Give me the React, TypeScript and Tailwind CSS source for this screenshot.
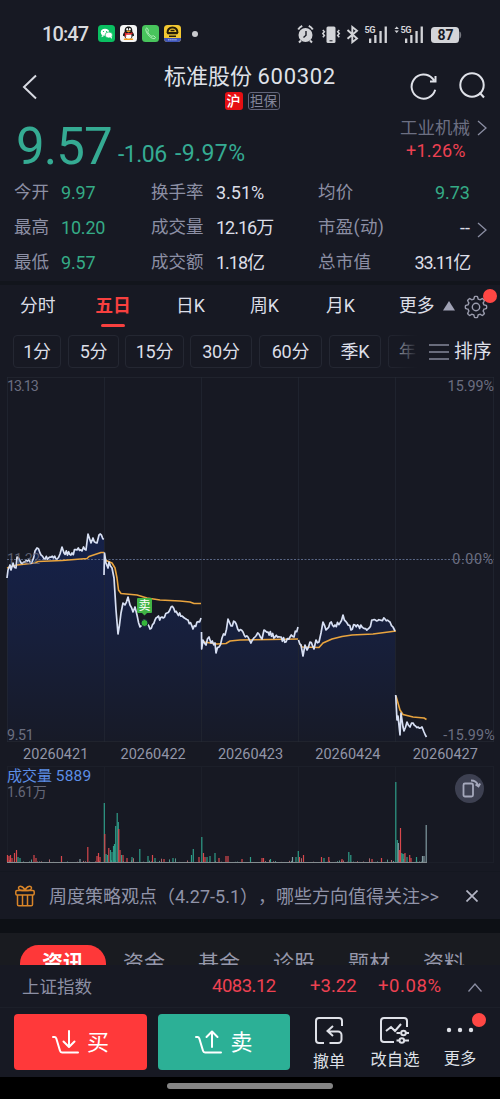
import React from "react";

type Pt = [number, number];

const PRICE: Pt[][] = [
  [[7, 578], [8, 570], [10, 565], [11, 570], [13, 563], [16, 568], [17, 557], [20, 561], [25, 562], [32, 562], [35, 551], [37, 548], [40, 553], [45, 559], [50, 557], [57, 559], [60, 554], [62, 547], [64, 553], [72, 553], [77, 550], [82, 551], [83.5, 547], [86, 550], [88, 534], [91, 543], [93, 538], [97, 543], [99, 535], [104, 539]],
  [[104, 575], [104.5, 553], [106, 563], [108, 568], [109, 562], [112, 568], [114, 578], [116, 610], [118, 634], [121, 613], [123, 603], [125, 605], [128, 597], [130, 605], [133, 612], [135, 607], [137, 615], [140, 627], [143, 621], [147, 624], [150, 629], [155, 620], [162, 617], [167, 613], [171, 607], [175, 612], [182, 616], [188, 620], [193, 629], [197, 622], [201, 618]],
  [[201.5, 632], [201.7, 649], [203, 640], [206, 645], [209, 637], [211, 643], [215, 643], [216, 653], [219, 647], [222, 638], [225, 635], [228, 619], [231, 626], [235, 622], [239, 631], [243, 632], [248, 637], [251, 643], [255, 637], [259, 634], [262, 639], [264, 630], [268, 632], [275, 637], [280, 637], [286, 642], [290, 637], [294, 637], [298, 627]],
  [[298.5, 640], [301, 645], [303, 656], [305, 645], [307, 650], [310, 642], [314, 649], [316, 640], [319, 642], [321, 633], [323, 622], [326, 630], [330, 623], [335, 625], [340, 623], [343, 615], [347, 623], [351, 630], [355, 625], [362, 627], [368, 629], [373, 620], [380, 620], [385, 619], [390, 622], [393, 627], [395, 631]],
  [[395.7, 695], [397, 720], [398, 716], [400, 735], [401, 713], [403, 727], [404, 731], [407, 722], [410, 727], [413, 723], [418, 727], [422, 727], [424, 732], [426.5, 737]],
];

const AVERAGE: Pt[][] = [
  [[7, 568], [17, 565], [35, 563], [38, 561.5], [62, 560.5], [87, 558.5], [89, 556.5], [101, 552.5], [104, 552.5]],
  [[105, 560], [112, 563], [115, 568], [117, 578], [118.5, 590], [121, 593.5], [137, 595], [147, 598], [160, 600], [180, 601], [190, 602], [194, 603.5], [201, 603.5]],
  [[203, 642], [211, 643], [217, 644], [226, 643.5], [230, 641], [240, 640], [270, 639.5], [298, 639]],
  [[300, 644], [302, 647], [319, 647.5], [323, 643], [332, 639], [342, 636.5], [352, 635], [373, 634], [396, 631]],
  [[396, 696], [398, 703], [400, 710], [403, 714.5], [413, 717], [424, 718], [426.5, 719.5]],
];

const noise = (n: number) => {
  const v = Math.sin(n * 127.1) * 43758.5453;
  return v - Math.floor(v);
};

const roughen = (pts: Pt[]): Pt[] => {
  const out: Pt[] = [];
  pts.forEach((p, i) => {
    out.push(p);
    const next = pts[i + 1];
    if (!next) return;
    const steps = Math.floor((next[0] - p[0]) / 1.1);
    for (let s = 1; s < steps; s++) {
      const t = s / steps;
      const x = p[0] + (next[0] - p[0]) * t;
      out.push([x, p[1] + (next[1] - p[1]) * t + (noise(x) - 0.5) * 5]);
    }
  });
  return out;
};

const toPath = (pts: Pt[]) => "M" + pts.map(([x, y]) => `${x.toFixed(1)} ${y.toFixed(1)}`).join("L");
const priceLines = PRICE.map(roughen);

type Bar = [number, number, "r" | "g" | "w"];
const BARS: Bar[] = [
  [7.5, 7, "r"], [9, 6, "r"], [10.5, 7, "r"], [12, 4, "r"], [14.5, 9, "r"], [16.5, 12, "r"], [18, 5, "g"], [20, 4, "g"], [34, 7, "r"], [36, 4, "r"], [61.5, 6, "r"], [80, 3, "w"], [87.8, 15, "r"], [97, 6, "r"], [98.5, 9, "r"], [100, 5, "r"],
  [104.3, 59, "g"], [104.8, 28, "r"], [106, 8, "g"], [107.5, 7, "g"], [108.8, 14, "r"], [110.5, 12, "g"], [112, 10, "g"], [113.5, 16, "g"], [114.5, 18, "g"], [115.7, 36, "g"], [117.2, 49, "g"], [118.3, 40, "g"], [118.8, 33, "r"], [120, 12, "r"], [121.5, 7, "g"], [123, 7, "r"], [127, 4, "r"], [132, 5, "g"], [139.8, 13, "g"], [148, 6, "g"], [152.5, 7, "r"], [155, 4, "g"], [164, 3, "r"], [173, 4, "g"], [191.5, 7, "g"], [193.3, 13, "g"], [199, 5, "r"],
  [201.8, 25, "g"], [203.5, 9, "r"], [205, 5, "r"], [207, 5, "g"], [210, 6, "g"], [215, 9, "g"], [219, 4, "r"], [226, 6, "r"], [228, 6, "r"], [242, 3, "r"], [250.5, 5, "g"], [262, 4, "r"], [263.5, 4, "r"], [270.5, 3, "g"], [292.5, 5, "w"], [296, 5, "g"],
  [298.3, 11, "g"], [299.5, 5, "r"], [303.5, 7, "r"], [321.5, 5, "r"], [324, 4, "g"], [328.8, 5, "r"], [342, 3, "r"], [348.8, 10, "g"], [350.8, 7, "g"], [372, 3, "r"], [381.5, 4, "r"],
  [395.8, 80, "g"], [397.3, 22, "g"], [398.3, 19, "w"], [399.3, 12, "r"], [400.5, 34, "r"], [401.8, 9, "g"], [402.8, 8, "g"], [404, 8, "g"], [405, 9, "r"], [407, 5, "g"], [409.7, 7, "r"], [411, 4, "r"], [416.5, 5, "g"], [422.5, 6, "w"], [424, 6, "w"], [426.2, 37, "w"],
];
const barColor = { r: "#d8474c", g: "#2f9d88", w: "#829ba1" };

function Chevron({ className }: { className?: string }) {
  return (
    <svg viewBox="0 0 10 16" width="10" height="16" className={className} fill="none" stroke="#8b8ea3" strokeWidth="1.3">
      <path d="M1 1l8 7-8 7" />
    </svg>
  );
}

function StatusBar() {
  return (
    <div className="flex h-[58px] items-center pt-[9px] pl-[42px] pr-[38px] text-[#d9dade]">
      <span className="w-[56px] text-[20px] font-medium tracking-[-0.9px]">10:47</span>
      <div className="flex gap-[5px]">
        <svg width="17" height="17" viewBox="0 0 17 17">
          <rect width="17" height="17" rx="3.5" fill="#0abf61" />
          <ellipse cx="7" cy="7.3" rx="4.2" ry="3.5" fill="#fff" />
          <ellipse cx="10.8" cy="10" rx="3.7" ry="3" fill="#fff" stroke="#0abf61" strokeWidth=".7" />
          <circle cx="5.5" cy="6.5" r=".6" fill="#0abf61" /><circle cx="8.6" cy="6.5" r=".6" fill="#0abf61" />
          <path d="M4 10l-.5 2.3L6 11zM12 12l2 1.900-.3-2.400z" fill="#fff" />
        </svg>
        <svg width="17" height="17" viewBox="0 0 17 17">
          <rect width="17" height="17" rx="3.5" fill="#f5f5f5" />
          <path d="M8.5 1.5c-3 0-4 2.3-3.8 5C3.5 8 2.8 9.8 3 11c.6.3 1.2-.6 1.2-.6.4 2 1.5 4 4.3 4s3.9-2 4.3-4c0 0 .6.9 1.2.6.2-1.200-.5-3-1.700-4.500.2-2.700-.8-5-3.800-5z" fill="#161616" />
          <ellipse cx="8.5" cy="11" rx="3" ry="3.3" fill="#fff" />
          <path d="M4.5 7.3c2.5 1.3 5.500 1.3 8 0v1.600c-2.500 1.100-5 1.100-6.300.8v2H4.900V9.200z" fill="#df2727" />
          <ellipse cx="7.2" cy="4.2" rx=".9" ry="1.2" fill="#fff" /><ellipse cx="9.8" cy="4.2" rx=".9" ry="1.2" fill="#fff" />
          <ellipse cx="8.5" cy="6.3" rx="2.2" ry=".7" fill="#f5a51b" />
          <path d="M4.500 14.200h3.500M9 14.200h3.500" stroke="#f39a1b" strokeWidth="1.5" strokeLinecap="round" />
        </svg>
        <svg width="17" height="17" viewBox="0 0 17 17">
          <rect width="17" height="17" rx="3.5" fill="#48c45c" />
          <path d="M4 3.5C2.8 6 7.5 13.5 12 13.7c1.3 0 1.7-1.2 1.2-1.700l-1.700-1.200c-.6-.3-1 .6-1.700.5C8 10.700 6 8.200 5.700 7c0-.7.9-1 .7-1.700l-.9-1.800c-.4-.6-1-.6-1.500 0z" fill="none" stroke="#c8f5ce" strokeWidth=".8" />
        </svg>
        <svg width="17" height="17" viewBox="0 0 17 17">
          <rect width="17" height="17" rx="3.5" fill="#f3c832" />
          <path d="M3.500 8c0-3.500 2-5.500 5-5.500s5 2 5 5.500" fill="none" stroke="#251d09" strokeWidth="2" />
          <rect x="3" y="7" width="11" height="2.2" rx="1" fill="#251d09" />
          <path d="M5 11.300h7M6.500 5.500h4" stroke="#251d09" strokeWidth="1.600" />
          <path d="M0 13h17v.5a3.500 3.500 0 0 1-3.500 3.500h-10A3.500 3.500 0 0 1 0 13.500z" fill="#3f55b8" />
          <path d="M4 14.800h9" stroke="#d7def7" strokeWidth=".8" strokeDasharray="1.500 .6" />
        </svg>
      </div>
      <span className="ml-[11px] size-[6px] rounded-full bg-[#c9cace]" />
      <svg className="ml-auto" width="166" height="20" viewBox="296 23 166 20" fill="none" stroke="#d3d4d8">
        <circle cx="305.500" cy="34" r="7" fill="#d3d4d8" stroke="none" />
        <path d="M298.200 28.500a10 10 0 0 1 4-3.600M312.800 28.500a10 10 0 0 0-4-3.600M301 39.500l-2 2M310 39.500l2 2" strokeWidth="2" />
        <path d="M306 30v4.200l-2.500 2.300" stroke="#171923" strokeWidth="1.400" />
        <rect x="326.500" y="25.500" width="9" height="16.500" rx="1.500" fill="#d3d4d8" stroke="none" />
        <path d="M329.500 39.800h3" stroke="#171923" strokeWidth="1" />
        <path d="M322.800 29l1.600 1.800-1.600 1.800 1.600 1.800-1.600 1.800M339.300 29l-1.600 1.800 1.600 1.800-1.600 1.800 1.600 1.800" strokeWidth="1.500" />
        <path d="M347.500 29l9.500 8.500-4.700 3.700V26l4.700 3.800-9.500 8" strokeWidth="1.900" />
        <g fill="#d3d4d8" stroke="none">
          <text x="364.500" y="32" fontSize="9.200" fontWeight="700" textLength="11">5G</text>
          <text x="400.500" y="32" fontSize="9.200" fontWeight="700" textLength="11">5G</text>
          <path d="M394.500 28l2.200-2.600 2.200 2.600zM394.500 29.500l2.200 2.600 2.200-2.600z" />
          <path d="M369 37.500h2.300V42H369zM374.200 34h2.300v8h-2.300zM379.400 30h2.300v12h-2.300zM384.600 25.500h2.300V42h-2.300zM405 37.500h2.300V42H405zM410.200 34h2.300v8h-2.300zM415.400 30h2.300v12h-2.300zM420.600 25.500h2.300V42h-2.300z" />
          <rect x="431" y="26" width="28" height="16" rx="3.500" />
          <path d="M459.300 30.500c2.500 0 2.500 7 0 7z" fill="#777980" />
          <text x="445.500" y="39" fontSize="14" fontWeight="700" fill="#171923" textAnchor="middle">87</text>
        </g>
      </svg>
    </div>
  );
}

function Header() {
  return (
    <header className="grid h-[57px] grid-cols-[100px_1fr_100px]">
      <svg className="mt-[16px] ml-[22px]" width="16" height="26" viewBox="0 0 16 26" fill="none" stroke="#d8dae2" strokeWidth="2">
        <path d="M14 1.500L2 13l12 11.500" />
      </svg>
      <div className="flex flex-col items-center pt-[4px]">
        <h1 className="text-[22px] leading-[29px] font-normal whitespace-nowrap text-[#dfe1e8]">标准股份 <span className="tracking-[.7px]">600302</span></h1>
        <div className="mt-[1px] ml-[4px] flex gap-[5px] text-[14px]">
          <span className="flex h-[18px] w-[18px] items-center justify-center rounded-[3px] bg-[#e60f12] font-medium text-white">沪</span>
          <span className="flex h-[18px] w-[32px] items-center justify-center rounded-[3px] border border-[#62657a] text-[13.500px] text-[#85889c]">担保</span>
        </div>
      </div>
      <div className="flex pt-[14px] pl-[9px]">
        <svg width="30" height="30" viewBox="0 0 30 30" fill="none" stroke="#dfe1e8" strokeWidth="2">
          <path d="M26.200 17.800A12 12 0 1 1 23.500 6.500l1.500 2M26.500 4v5.500H21" />
        </svg>
        <svg className="ml-[18px]" width="30" height="30" viewBox="0 0 30 30" fill="none" stroke="#dfe1e8" strokeWidth="2">
          <circle cx="15" cy="13" r="11.700" /><path d="M22.500 20.500l4.500 5" />
        </svg>
      </div>
    </header>
  );
}

function Quote() {
  return (
    <section className="flex h-[59px] pr-[13px] pl-[16px]">
      <span className="w-[102px] pt-[3px] text-[51px] leading-[58px] tracking-[-0.900px] text-[#35ab93]">9.57</span>
      <span className="w-[57px] pt-[25px] text-[23px] leading-[30px] tracking-[-0.500px] text-[#35ab93]">-1.06</span>
      <span className="pt-[24px] text-[23px] leading-[30px] tracking-[.4px] text-[#35ab93]">-9.97%</span>
      <div className="ml-auto">
        <div className="flex h-[24px] items-center gap-[7px] pt-[2px] text-[17.500px] text-[#6c6f82]">工业机械<Chevron /></div>
        <div className="pl-[6px] text-[18px] leading-[24px] tracking-[.2px] text-[#ee4152]">+1.26%</div>
      </div>
    </section>
  );
}

const STATS: [string, string, string, string, string, string][] = [
  ["今开", "9.97", "换手率", "3.51%", "均价", "9.73"],
  ["最高", "10.20", "成交量", "12.16万", "市盈(动)", "--"],
  ["最低", "9.57", "成交额", "1.18亿", "总市值", "33.11亿"],
];

function Stats() {
  const tight = "tracking-[-1px]";
  const rightTone = ["text-[#35ab86]", "text-[#dcdee7]", "text-[#dcdee7] tracking-[-1.300px]"];
  return (
    <section className="h-[107px] pt-[1px] text-[17.500px] text-[#8c8fa4]">
      {STATS.map((r, i) => (
        <div key={r[0]} className="grid h-[35px] grid-cols-[47px_90px_65px_102px_85px_67px_1fr] items-center pl-[14px]">
          <span>{r[0]}</span>
          <span className="text-[18px] tracking-[-0.200px] text-[#35ab86]">{r[1]}</span>
          <span>{r[2]}</span>
          <span className={`text-[18px] whitespace-nowrap text-[#dcdee7] ${i > 0 ? tight : ""}`}>{r[3]}</span>
          <span className="whitespace-nowrap tracking-[.3px]">{r[4]}</span>
          <span className={`text-right text-[18px] whitespace-nowrap ${rightTone[i]}`}>{r[5]}</span>
          {i === 1 && <Chevron className="mt-[5px] ml-[7px]" />}
        </div>
      ))}
    </section>
  );
}

function gearPath() {
  const pts: string[] = [];
  for (let i = 0; i <= 96; i++) {
    const a = (i / 96) * Math.PI * 2;
    const w = Math.cos(a * 8);
    const r = 9.4 + Math.max(-1, Math.min(1, w * 1.8)) * 1.25;
    pts.push(`${(12 + Math.cos(a) * r).toFixed(2)} ${(12 + Math.sin(a) * r).toFixed(2)}`);
  }
  return "M" + pts.join("L") + "Z";
}

function PeriodTabs() {
  return (
    <nav className="grid h-[47px] grid-cols-[76px_80px_74px_76px_74px_44px_18px_1fr] border-t-4 border-[#12151c] pl-[20px] text-[17.800px] leading-[42px] text-[#dcdee7]">
      <span>分时</span>
      <div className="flex w-[34px] flex-col items-center font-bold text-[#f8403f]">
        <span className="h-[39px] leading-[42px] whitespace-nowrap">五日</span>
        <i className="h-[3px] w-[24px] shrink-0 rounded-full bg-[#f8403f]" />
      </div>
      <span>日K</span><span>周K</span><span>月K</span><span className="-ml-px">更多</span>
      <svg className="mt-[16px] -ml-px" width="12" height="10" viewBox="0 0 12 10"><path d="M6 0l6 9.500H0z" fill="#a0a2b5" /></svg>
      <div className="relative">
        <svg className="mt-[10px] ml-[2px]" width="24" height="24" viewBox="0 0 24 24" fill="none" stroke="#9a9cad" strokeWidth="1.400">
          <path d={gearPath()} /><circle cx="12" cy="12" r="3.700" />
        </svg>
        <span className="absolute top-[4px] left-[21px] size-[14px] rounded-full bg-[#ff4744]" />
      </div>
    </nav>
  );
}

function MinuteTabs() {
  const pill = "flex h-[33px] shrink-0 items-center justify-center rounded-[4px] border border-[#242732] text-[18px] tracking-[-0.200px]";
  return (
    <div className="flex h-[49px] items-start pt-[7px] pl-[13px] text-[#dcdee7]">
      <span className={`${pill} mr-[7px] w-[48px]`}>1分</span>
      <span className={`${pill} mr-[6px] w-[51px]`}>5分</span>
      <span className={`${pill} mr-[6px] w-[59px]`}>15分</span>
      <span className={`${pill} mr-[7px] w-[62px]`}>30分</span>
      <span className={`${pill} mr-[7px] w-[63px]`}>60分</span>
      <span className={`${pill} mr-[7px] w-[52px]`}>季K</span>
      <div className="relative w-[30px]">
        <span className="flex h-[33px] w-[30px] items-center rounded-l-[4px] border border-r-0 border-[#242732] pl-[10px] text-[17px]">年</span>
        <span className="absolute inset-0 bg-linear-to-r from-[#171923]/10 to-[#171923]" />
      </div>
      <svg className="mt-[9px] ml-[11px]" width="20" height="17" viewBox="0 0 20 17" stroke="#85889b" strokeWidth="1.500"><path d="M0 1h20M0 8h20M0 15h20" /></svg>
      <span className="ml-[5px] text-[18.800px] leading-[34px] whitespace-nowrap">排序</span>
    </div>
  );
}

function PriceChart() {
  return (
    <section className="relative h-[365px] text-[14.300px] leading-[16px] text-[#6b6e80]">
      <svg className="absolute inset-0" width="500" height="365" viewBox="0 377 500 365" fill="none">
        <defs>
          <linearGradient id="area" gradientUnits="userSpaceOnUse" x1="0" y1="535" x2="0" y2="742">
            <stop offset="0" stopColor="#152149" />
            <stop offset=".5" stopColor="#171f3b" />
            <stop offset="1" stopColor="#171a27" />
          </linearGradient>
        </defs>
        {priceLines.map((p, i) => (
          <path key={i} fill="url(#area)" d={`${toPath(p)}L${p[p.length - 1][0]} 742L${p[0][0]} 742Z`} />
        ))}
        <path d="M7 377.500H494M7 741.500H494" stroke="#20232d" />
        <path d="M7.500 377v365M104.500 377v365M201.500 377v365M298.500 377v365M395.500 377v365M493.500 377v365" stroke="#252936" strokeOpacity=".6" />
        <path d="M7 559.500H494" stroke="#596685" strokeDasharray="2 1.500" />
        {AVERAGE.map((p, i) => <path key={i} d={toPath(p)} stroke="#e9a43e" strokeWidth="1.600" strokeLinejoin="round" />)}
        {priceLines.map((p, i) => <path key={i} d={toPath(p)} stroke="#d7dff3" strokeWidth="1.700" strokeLinejoin="round" />)}
        <circle cx="144.500" cy="623" r="3.500" fill="#35b63b" stroke="#171e3a" strokeWidth="1" />
        <path d="M141 612h7l-3.500 3.500z" fill="#41b445" />
      </svg>
      <span className="absolute top-[1px] left-[7px] tracking-[-1px]">13.13</span>
      <span className="absolute top-[1px] right-[6px]">15.99%</span>
      <span className="absolute top-[174px] left-[7px] tracking-[-0.700px] opacity-80">11.32</span>
      <span className="absolute top-[174px] right-[6px] tracking-[.7px]">0.00%</span>
      <span className="absolute top-[350px] left-[7px] tracking-[-0.400px]">9.51</span>
      <span className="absolute top-[350px] right-[5px] tracking-[.2px]">-15.99%</span>
      <span className="absolute top-[221px] left-[137px] flex h-[15px] w-[15px] items-center justify-center rounded-[1px] bg-[#41b445] text-[12px] text-white">卖</span>
    </section>
  );
}

function VolumeChart() {
  return (
    <section className="relative h-[105px]">
      <svg className="absolute inset-0" width="500" height="105" viewBox="0 766 500 105" fill="none">
        <path d="M7 766.500H494M7 862.500H494M7.500 766v97M104.500 766v97M201.500 766v97M298.500 766v97M395.500 766v97M493.500 766v97" stroke="#1c1f29" />
        <path d="M7 862.500H427" stroke="#848c90" />
        {Array.from({ length: 210 }, (_, i) => (
          <path key={i} d={`M${7.5 + i * 2} 862V${(862 - Math.pow(noise(i + 3), 7) * 4).toFixed(1)}`} stroke={noise(i + 40) > 0.5 ? "#a9666b" : "#56958a"} />
        ))}
        {BARS.map(([x, h, c], i) => <path key={i} d={`M${x} 862V${862 - h}`} stroke={barColor[c]} strokeWidth="1.200" />)}
      </svg>
      <div className="relative flex flex-col pl-[7px]">
        <span className="text-[15px] leading-[20px] text-[#5c8ee6]">成交量 <span className="text-[15.500px] tracking-[.2px]">5889</span></span>
        <span className="mt-[-2px] text-[14px] leading-[16px] tracking-[-0.400px] text-[#656879]">1.61万</span>
      </div>
      <span className="absolute top-[8px] left-[455px] size-[29px] rounded-full bg-[#3d4051]">
        <svg width="29" height="29" viewBox="0 0 29 29" fill="none" stroke="#a5a8bc" strokeWidth="1.800">
          <rect x="8.500" y="9.500" width="9.500" height="13" rx="1.500" />
          <path d="M16 6.500c3.500 0 6 1.500 7.200 5M20.500 10.500l3 2 1.700-3" />
        </svg>
      </span>
    </section>
  );
}

function Banner() {
  return (
    <div className="flex h-[48px] items-center border-t border-[#141720] pl-[15px] text-[18px] text-[#9093a8]">
      <svg width="20" height="22" viewBox="0 0 20 22" fill="none" stroke="#d98528" strokeWidth="1.500">
        <rect x=".8" y="5.500" width="18.400" height="4.500" rx="1.200" />
        <path d="M2.500 10v9.500c0 .8.500 1.300 1.300 1.300h12.400c.8 0 1.300-.5 1.300-1.300V10M7.500 10v10.500M12.500 10v10.500" />
        <path d="M10 5.500C7.500 5.500 3.500 5.700 3.500 3S8.500.8 10 5.500zM10 5.500c2.500 0 6.500.2 6.500-2.500S11.500.8 10 5.500z" />
      </svg>
      <span className="ml-[14px] w-[417px] pt-[2px] whitespace-nowrap [text-spacing-trim:space-all]">周度策略观点（4.27-5.1），哪些方向值得关注&gt;&gt;</span>
      <svg width="12" height="12" viewBox="0 0 12 12" stroke="#b3b5c4" strokeWidth="1.700"><path d="M.5.5l11 11M11.500.5l-11 11" /></svg>
    </div>
  );
}

function NewsTabs() {
  return (
    <div className="grid h-[46px] grid-cols-[86px_75px_75px_75px_75px_1fr] items-start overflow-hidden border-t-[14px] border-[#0d1015] bg-[#191b20] pl-[20px] text-[21px] leading-[36px] text-[#9698ab]">
      <span className="mt-[12px] h-[37px] rounded-full bg-[#fe3839] text-center font-bold text-white">资讯</span>
      <span className="mt-[12px] pl-[17px]">资金</span>
      <span className="mt-[12px] pl-[17px]">基金</span>
      <span className="mt-[12px] pl-[17px]">诊股</span>
      <span className="mt-[12px] pl-[17px]">题材</span>
      <span className="mt-[12px] pl-[17px]">资料</span>
    </div>
  );
}

function IndexRow() {
  return (
    <div className="flex h-[43px] items-center border-b border-[#1c1f29] pt-[2px] pl-[22px] text-[18.500px] text-[#ee4152]">
      <span className="w-[190px] text-[17.500px] text-[#8c8fa4]">上证指数</span>
      <span className="w-[98px] tracking-[-0.500px]">4083.12</span>
      <span className="w-[68px]">+3.22</span>
      <span className="w-[90px] tracking-[.6px]">+0.08%</span>
      <svg width="14" height="9" viewBox="0 0 14 9" fill="none" stroke="#8b8ea3" strokeWidth="1.300"><path d="M.5 8.500L7 1l6.500 7.500" /></svg>
    </div>
  );
}

function TradeBar() {
  return (
    <div className="flex h-[69px] pt-[6px] pl-[14px] text-[#dfe1e8]">
      <button className="flex h-[56px] w-[133px] items-center justify-center gap-[8px] rounded-[4px] bg-[#ff393a] text-[22px] text-white">
        <svg width="27" height="24" viewBox="0 0 27 24" fill="none" stroke="#fff" strokeWidth="2" strokeLinecap="round" strokeLinejoin="round">
          <path d="M1 7h1.500c1 0 1.500.6 1.800 1.500l3.700 12.300c.3 1.100.9 1.700 2 1.700h16M17 1v15M11.500 11.500L17 17l5.500-5.500" />
        </svg>买
      </button>
      <button className="ml-[11px] flex h-[56px] w-[132px] items-center justify-center gap-[8px] rounded-[4px] bg-[#2cb096] text-[22px] text-white">
        <svg width="27" height="24" viewBox="0 0 27 24" fill="none" stroke="#fff" strokeWidth="2" strokeLinecap="round" strokeLinejoin="round">
          <path d="M1 7h1.500c1 0 1.500.6 1.800 1.500l3.700 12.300c.3 1.100.9 1.700 2 1.700h16M17 17V2M11.500 7L17 1.500 22.500 7" />
        </svg>卖
      </button>
      <div className="ml-[22px] flex w-[34px] flex-col items-center pt-[3px] text-[16px] whitespace-nowrap">
        <svg width="28" height="28" viewBox="0 0 28 28" fill="none" stroke="#dfe1e8" strokeWidth="2">
          <path d="M27 9V4a3 3 0 0 0-3-3H4a3 3 0 0 0-3 3v19a3 3 0 0 0 3 3h5M18 9l-5.500 5 5.500 5M12.500 14.500H23a3.500 3.500 0 0 1 3.500 3.500v4.500A3.500 3.500 0 0 1 23 26h-8.500" />
        </svg>
        <span className="mt-[6px] leading-[21px]">撤单</span>
      </div>
      <div className="ml-[21px] flex w-[56px] flex-col items-center pt-[3px] text-[16.300px] whitespace-nowrap">
        <svg width="30" height="28" viewBox="0 0 30 28" fill="none" stroke="#dfe1e8" strokeWidth="2">
          <path d="M27 10V4a3 3 0 0 0-3-3H4a3 3 0 0 0-3 3v18a3 3 0 0 0 3 3h10M6 14l5-4 4 4 6-7M16.500 16h4M26 16h3M16.500 23.500h2.500M25 23.500h4" />
          <circle cx="23.500" cy="16" r="2.300" /><circle cx="21.800" cy="23.500" r="2.300" />
        </svg>
        <span className="mt-[4px] leading-[21px]">改自选</span>
      </div>
      <div className="relative ml-[18px] flex w-[38px] flex-col items-center pt-[13px] text-[16.300px] whitespace-nowrap">
        <svg width="28" height="6" viewBox="0 0 28 6" fill="#dfe1e8"><circle cx="3" cy="3" r="2.200" /><circle cx="14" cy="3" r="2.200" /><circle cx="25" cy="3" r="2.200" /></svg>
        <span className="mt-[15px] leading-[21px]">更多</span>
        <span className="absolute top-[-1px] left-[31px] size-[14px] rounded-full bg-[#ff4744]" />
      </div>
    </div>
  );
}

export default function App() {
  return (
    <main className="h-[1099px] w-[500px] overflow-hidden bg-[#171923] font-[Roboto,'Noto_Sans_CJK_SC',sans-serif]">
      <StatusBar />
      <Header />
      <Quote />
      <Stats />
      <PeriodTabs />
      <MinuteTabs />
      <PriceChart />
      <div className="grid h-[24px] grid-cols-5 pt-px pr-[6px] pl-[7px] text-center text-[14.500px] leading-[24px] text-[#9295a7]">
        <span>20260421</span><span>20260422</span><span>20260423</span><span>20260424</span><span>20260427</span>
      </div>
      <VolumeChart />
      <Banner />
      <NewsTabs />
      <IndexRow />
      <TradeBar />
      <footer className="flex h-[22px] justify-center bg-black pt-[6px]">
        <span className="h-[6px] w-[166px] rounded-full bg-[#858585]" />
      </footer>
    </main>
  );
}
